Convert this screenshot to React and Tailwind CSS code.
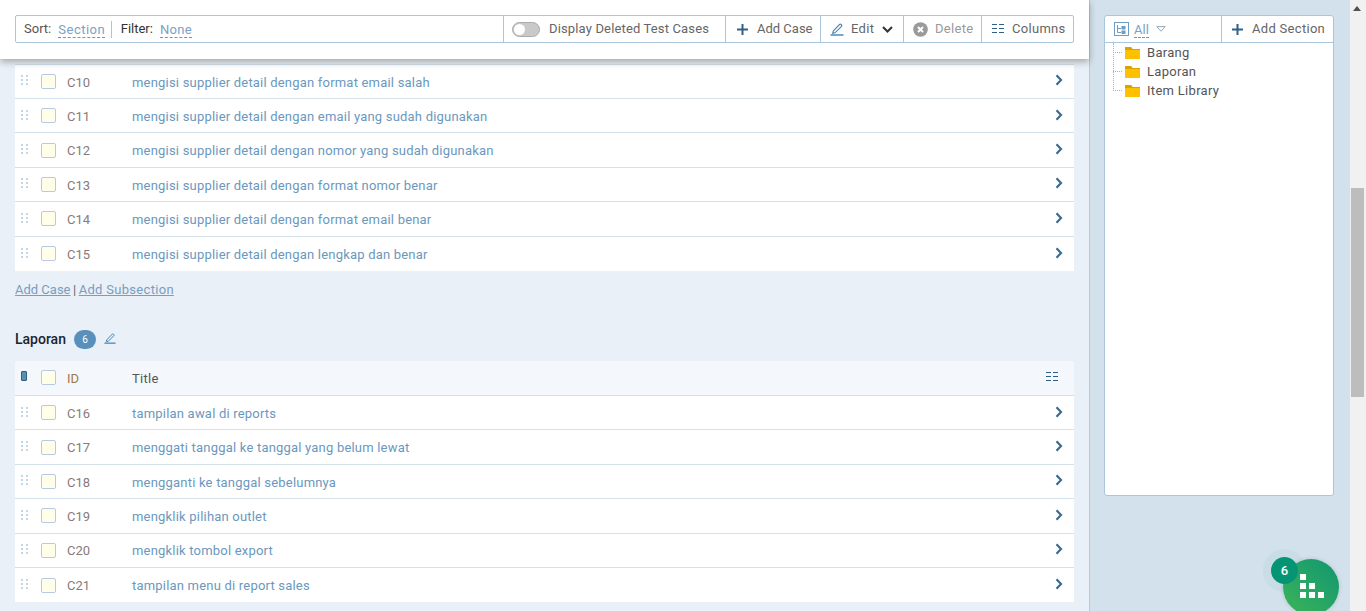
const font = { fontFamily: '"Roboto", "Liberation Sans", sans-serif' };

function Pencil({ className = "", size = 14 }) {
  return (
    <svg viewBox="0 0 14 14" width={size} height={size} className={className} fill="none" stroke="#3f81b0" strokeWidth="1.100">
      <path d="M3.2 9.2 9.6 2.4a.9.9 0 0 1 1.3 0l.6.6a.9.9 0 0 1 0 1.3L5 10.8l-2.3.5z" />
      <path d="M.5 13h13" strokeWidth="1.4" />
    </svg>
  );
}
function Grip() {
  return (
    <svg width="7" height="10" viewBox="0 0 7 10" fill="#c4d5e3">
      {[0, 4, 8].map((y) => (
        <g key={y}>
          <rect x="0" y={y} width="2" height="2" />
          <rect x="5" y={y} width="2" height="2" />
        </g>
      ))}
    </svg>
  );
}
function ColumnsIcon() {
  return (
    <svg width="12" height="11" viewBox="0 0 12 11" fill="#2f5f85">
      {[0, 4, 8].map((y) => (
        <g key={y}>
          <rect x="0" y={y} width="5" height="1" />
          <rect x="7" y={y} width="5" height="1" />
        </g>
      ))}
    </svg>
  );
}
function Chevron() {
  return (
    <svg width="8" height="12" viewBox="0 0 8 12" fill="none" stroke="#3c6c90" strokeWidth="2.2">
      <path d="M1.5 1.2 6 6l-4.500 4.800" />
    </svg>
  );
}
function Plus() {
  return (
    <svg width="11" height="11" viewBox="0 0 11 11" fill="#2f6188">
      <rect x="4.500" y="0" width="2" height="11" />
      <rect x="0" y="4.500" width="11" height="2" />
    </svg>
  );
}
function Folder() {
  return (
    <svg width="15" height="12" viewBox="0 0 15 12" className="shrink-0">
      <path d="M0 0h6l1.500 2H15v10H0z" fill="#ffc000" />
      <path d="M0 0h6l1.500 2H15v1H0z" fill="#d9a300" />
    </svg>
  );
}
function Row({ id, title }) {
  return (
    <div className="flex items-center bg-white border-b border-[#d3e1eb] last:border-b-0 h-[34.4px]">
      <div className="w-[26px] pl-[6px] -mt-[2px] flex shrink-0"><Grip /></div>
      <div className="w-[15px] h-[15px] bg-[#fffee8] border border-[#b9c9e4] rounded-[2px] shrink-0" />
      <div className="w-[76px] pl-[11px] mt-[2px] text-[#8a7a78] shrink-0">{id}</div>
      <div className="flex-1 mt-[2px] text-[#6b98bd] tracking-[0.2px]">{title}</div>
      <div className="w-[19px] -mt-[2px] flex shrink-0"><Chevron /></div>
    </div>
  );
}

const first = [
  ["C10", "mengisi supplier detail dengan format email salah"],
  ["C11", "mengisi supplier detail dengan email yang sudah digunakan"],
  ["C12", "mengisi supplier detail dengan nomor yang sudah digunakan"],
  ["C13", "mengisi supplier detail dengan format nomor benar"],
  ["C14", "mengisi supplier detail dengan format email benar"],
  ["C15", "mengisi supplier detail dengan lengkap dan benar"],
];
const second = [
  ["C16", "tampilan awal di reports"],
  ["C17", "menggati tanggal ke tanggal yang belum lewat"],
  ["C18", "mengganti ke tanggal sebelumnya"],
  ["C19", "mengklik pilihan outlet"],
  ["C20", "mengklik tombol export"],
  ["C21", "tampilan menu di report sales"],
];

const cell = "flex items-center h-full border-l border-[#a9c6dc] shrink-0";

export default function App() {
  return (
    <div style={font} className="w-[1366px] h-[611px] flex overflow-hidden text-[13px] text-[#4a4a4a] bg-[#f1f1f1]">
      <main className="w-[1089px] h-full bg-[#e9f0f7] flex flex-col shrink-0">
        <div className="h-[59px] bg-white shadow-[0_3px_7px_rgba(0,0,0,0.3)] relative z-10 pt-[15px] pl-[15px] pr-[15px] shrink-0">
          <div className="h-[28px] border border-[#a9c6dc] rounded-[2px] flex items-center text-[#555]">
            <div className="flex-1 flex items-center pl-[8px]">
              <span>Sort:</span>
              <span className="ml-[7px] text-[#7da0c4] tracking-[0.5px] border-b border-dashed border-[#6f93bb] leading-[15px] mt-[1px]">Section</span>
              <span className="w-px h-[17px] bg-[#a9c6dc] ml-[5.500px] mr-[9px]" />
              <span className="text-[#333]">Filter:</span>
              <span className="ml-[7px] text-[#7da0c4] tracking-[0.3px] border-b border-dashed border-[#6f93bb] leading-[15px] mt-[1px]">None</span>
            </div>
            <div className={`${cell} w-[222px] pl-[8px] text-[#666]`}>
              <span className="w-[28px] h-[15px] rounded-full bg-[#c9c9c9] border border-[#aaa] flex items-center pl-[1px] mr-[9px] shrink-0">
                <span className="w-[11px] h-[11px] rounded-full bg-white" />
              </span>
              <span className="tracking-[0.15px]">Display Deleted Test Cases</span>
            </div>
            <div className={`${cell} w-[95px] pl-[11px] gap-[9px] text-[#666]`}><Plus />Add Case</div>
            <div className={`${cell} w-[83px] pl-[9px] gap-[7px] text-[#666]`}>
              <Pencil />
              <span className="tracking-[0.3px]">Edit</span>
              <svg width="11" height="7" viewBox="0 0 11 7" fill="none" stroke="#333" strokeWidth="2" className="ml-[1px]"><path d="M1 1l4.500 4.500L10 1" /></svg>
            </div>
            <div className={`${cell} w-[78px] pl-[9px] gap-[7px] text-[#999]`}>
              <svg width="15" height="15" viewBox="0 0 15 15"><circle cx="7.500" cy="7.500" r="7.300" fill="#9a9a9a" /><path d="M5 5l5 5M10 5l-5 5" stroke="#fff" strokeWidth="2" /></svg>
              <span className="tracking-[0.3px]">Delete</span>
            </div>
            <div className={`${cell} w-[92px] pl-[10px] gap-[8px] text-[#666]`}><ColumnsIcon /><span className="tracking-[0.3px]">Columns</span></div>
          </div>
        </div>
        <div className="px-[15px] pt-[4.600px] flex-1 overflow-hidden">
          <div className="bg-white rounded-b-[2px] border-t border-[#d3e1eb]">
            {first.map(([id, t]) => <Row key={id} id={id} title={t} />)}
          </div>
          <div className="mt-[11px] h-[16px] leading-[16px] text-[#7b9cbd]">
            <span className="underline">Add Case</span><span className="text-[#666] mx-[2.500px]">|</span><span className="underline tracking-[0.3px]">Add Subsection</span>
          </div>
          <div className="mt-[31.500px] h-[20px] flex items-center">
            <span className="text-[#1b2530] font-medium text-[14px]">Laporan</span>
            <span className="ml-[8px] w-[22px] h-[19px] rounded-full bg-[#5990bb] text-white text-[10px] flex items-center justify-center">6</span>
            <Pencil size={12} className="ml-[8px] -mt-[2px]" />
          </div>
          <div className="mt-[11.500px] bg-white rounded-t-[3px]">
            <div className="h-[35px] flex items-center bg-[#f4f8fd] border-b border-[#d3e1eb] rounded-t-[3px]">
              <div className="w-[26px] pl-[6px] -mt-[3px] shrink-0"><div className="w-[6px] h-[10px] bg-[#5a8eb5] border border-[#2f5f85] rounded-[1px]" /></div>
              <div className="w-[15px] h-[15px] bg-[#fffee8] border border-[#b9c9e4] rounded-[2px] shrink-0" />
              <div className="w-[76px] pl-[11px] mt-[2px] text-[#a0764c] shrink-0">ID</div>
              <div className="flex-1 mt-[2px] text-[#555] tracking-[0.3px]">Title</div>
              <div className="w-[28px] flex shrink-0"><ColumnsIcon /></div>
            </div>
            {second.map(([id, t]) => <Row key={id} id={id} title={t} />)}
          </div>
        </div>
      </main>
      <aside className="w-[261px] h-full bg-[#d2e1eb] border-l border-[#b4c9da] pt-[15px] pl-[14px] relative shrink-0">
        <div className="w-[230px] h-[481px] bg-white border border-[#a9c6dc] rounded-[3px]">
          <div className="h-[27px] flex items-center border-b border-[#a9c6dc] text-[#666]">
            <div className="w-[117px] h-full flex items-center pl-[9px] border-r border-[#a9c6dc]">
              <svg width="15" height="14" viewBox="0 0 15 14" fill="none" stroke="#6f9cc0" strokeWidth="1">
                <rect x="0.500" y="0.500" width="14" height="13" />
                <path d="M3.500 3v7.500H7M3.500 6.500H7" />
                <rect x="8" y="4.500" width="3" height="2.500" fill="#6f9cc0" />
                <rect x="8" y="9" width="3" height="2.500" fill="#6f9cc0" />
              </svg>
              <span className="ml-[5px] text-[#7da0c4] border-b border-dashed border-[#6f93bb] leading-[15px] mt-[1px]">All</span>
              <svg width="10" height="6" viewBox="0 0 10 6" fill="none" stroke="#9aa9b8" className="ml-[7px]"><path d="M.8.600h8.400L5 5.200z" /></svg>
            </div>
            <div className="flex-1 pl-[10px] flex items-center gap-[9px]"><Plus /><span className="tracking-[0.3px]">Add Section</span></div>
          </div>
          <div className="relative pl-[20px] text-[#555]">
            <div className="absolute left-[8px] top-0 h-[48px] border-l border-dotted border-[#8fb8d4]" />
            {["Barang", "Laporan", "Item Library"].map((n) => (
              <div key={n} className="h-[19px] flex items-center gap-[7px] relative tracking-[0.3px]">
                <div className="absolute -left-[12px] top-[9px] w-[9px] border-t border-dotted border-[#8fb8d4]" />
                <Folder />{n}
              </div>
            ))}
          </div>
        </div>
        <div className="absolute left-[173px] top-[549px] w-[43px] h-[43px] rounded-full bg-[#c9dde6]" />
        <div className="absolute left-[193px] top-[559px] w-[56px] h-[56px] rounded-full bg-gradient-to-tr from-[#3ab556] to-[#0d9670] shadow-[0_0_4px_rgba(0,0,0,0.15)]">
          <div className="ml-[17px] mt-[15px] grid grid-cols-3 gap-[3px] w-[24px]">
            {[1, 0, 0, 1, 1, 0, 1, 1, 1].map((v, i) => (
              <div key={i} className={`w-[6px] h-[6px] ${v ? "bg-white" : ""}`} />
            ))}
          </div>
        </div>
        <div className="absolute left-[181px] top-[557px] w-[27px] h-[27px] rounded-full bg-[#069574] text-white text-[13px] font-medium flex items-center justify-center">6</div>
      </aside>
      <div className="w-[16px] h-full bg-[#f1f1f1] flex flex-col shrink-0">
        <svg width="8" height="5" viewBox="0 0 8 5" className="mt-[6px] ml-[3px]" fill="#505050"><path d="M4 0l4 5H0z" /></svg>
        <div className="w-[13px] ml-[1px] h-[209px] bg-[#bdbdbd] mt-[177px]" />
      </div>
    </div>
  );
}
